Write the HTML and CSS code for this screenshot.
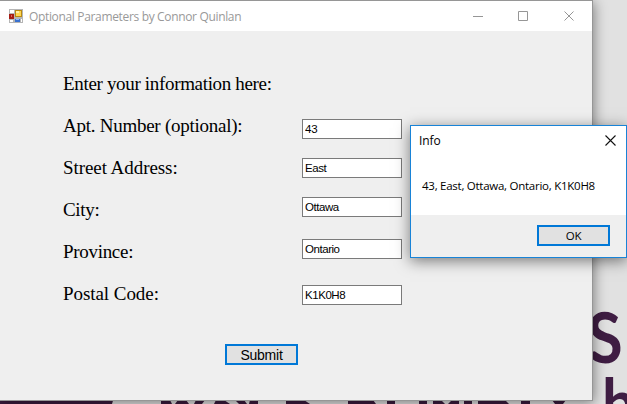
FILE: index.html
```html
<!DOCTYPE html>
<html lang="en">
<head>
<meta charset="utf-8">
<title>Optional Parameters by Connor Quinlan</title>
<link rel="stylesheet" href="styles.css">
</head>
<body>
<main class="desktop">
  <svg class="wallpaper" width="627" height="404" viewBox="0 0 627 404">
    <path class="ink" d="M0 380H119L112 404H0ZM161 400h9l2 4h-11ZM178 400h8l3 4h-14ZM196 400h9l-3 4h-8ZM216 400h8l6 4h-16ZM235 400h9l3 4h-8ZM250 400h8v4h-9ZM286 400h18l6 4h-24ZM348 400h25l3 4h-28ZM387 400h8v4h-8ZM419 400h8v4h-8ZM433 400h8l4 4h-12ZM452 400h7v4h-11ZM464 400h8v4h-8ZM478 400h27l4 4h-31ZM521 400h9v4h-9ZM552 400h14l-3 4h-8Z"/>
    <g class="lettering">
      <text transform="translate(589 363) skewX(3) scale(.9 1)" font-size="70">S</text>
      <text transform="translate(602 427) scale(.9 1)" font-size="67">h</text>
    </g>
  </svg>
  <section class="window">
    <header class="titlebar">
      <svg class="app-icon" width="14" height="14" viewBox="0 0 14 14">
        <path fill="#b5b5b5" d="M0 0h14v14H0z"/>
        <path fill="#fff" d="M1 1h4v3H1zM1 11h3v2H1zM12 10h1v3h-1z"/>
        <path fill="#a51c13" d="M0 5h5v5H0z"/><path fill="#e7685e" d="M2 6h1v2H2z"/>
        <path fill="#b98a12" d="M6 1h7v7H6z"/><path fill="#ffd650" d="M7 2h5v5H7z"/><path fill="#fff0a5" d="M7 2h3v2H7z"/>
        <path fill="#3971d0" d="M6 10h5v3H6z"/><path fill="#8db8ff" d="M7 10h3v1H7z"/>
      </svg>
      <h1 class="title">Optional Parameters by Connor Quinlan</h1>
      <svg class="controls" width="102" height="12" viewBox="0 0 102 12">
        <path d="M0 6.500h10M45.500 1.500h9v9h-9zM91.500 1.500l9 9M100.500 1.500l-9 9"/>
      </svg>
    </header>
    <form class="form">
      <p class="intro">Enter your information here:</p>
      <div class="fields">
        <div class="labels">
          <label class="wide" for="apt">Apt. Number (optional):</label>
          <label for="street">Street Address:</label>
          <label class="narrow" for="city">City:</label>
          <label class="narrow" for="province">Province:</label>
          <label for="postal">Postal Code:</label>
        </div>
        <div class="inputs">
          <input id="apt" class="apt" value="43">
          <input id="street" value="East">
          <input id="city" value="Ottawa">
          <input id="province" class="province" value="Ontario">
          <input id="postal" class="postal" value="K1K0H8">
        </div>
      </div>
      <button class="button submit" type="button">Submit</button>
    </form>
  </section>
  <section class="dialog" role="dialog">
    <header class="dialog-head">
      <h2 class="dialog-title">Info</h2>
      <svg width="11" height="11" viewBox="0 0 11 11"><path d="M.5.5l10 10M10.500.5l-10 10" fill="none" stroke="#111" stroke-width="1.100"/></svg>
    </header>
    <p class="message">43, East, Ottawa, Ontario, K1K0H8</p>
    <footer class="dialog-foot"><button class="button ok" type="button">OK</button></footer>
  </section>
</main>
</body>
</html>
```
FILE: styles.css
```css
* { box-sizing: border-box; }
body { margin: 0; }
h1, h2, p { margin: 0; font-weight: 400; }
.desktop { position: relative; width: 627px; height: 404px; overflow: hidden; background: #e1e1e1; }
.wallpaper { position: absolute; inset: 0; }
.ink { fill: #3b1b3e; }
.lettering { font-family: Lato, sans-serif; font-weight: 700; fill: #3f1d43; }
.window {
  position: absolute; left: -1px; top: 0; width: 594px; height: 401px;
  border: 1px solid #969696; background: #efefef;
  box-shadow: 1px 2px 12px rgba(0, 0, 0, .45);
}
.titlebar { display: flex; align-items: center; height: 30px; padding: 0 17px 0 9px; background: #fff; }
.title { margin-left: 6px; font: 12px "Open Sans", sans-serif; letter-spacing: -.34px; white-space: nowrap; color: #999; }
.controls { margin-left: auto; fill: none; stroke: #969696; }
.form { padding: 42px 0 0 63px; font: 19px/22px "Liberation Serif", serif; letter-spacing: -.06px; color: #000; }
.intro { height: 42px; letter-spacing: -.33px; }
.fields { display: flex; }
.labels { display: grid; grid-auto-rows: 42px; width: 239px; }
.wide { letter-spacing: -.26px; }
.narrow { letter-spacing: -.3px; }
.inputs { display: flex; flex-direction: column; gap: 19px; padding-top: 4px; }
.inputs input {
  width: 100px; height: 20px; padding: 0 2px; border: 1px solid #7a7a7a; border-radius: 0;
  background: #fff; color: #000; font: 11.5px "Liberation Sans", sans-serif; letter-spacing: -.45px;
}
.inputs .apt { letter-spacing: -.2px; }
.inputs .province { margin-top: 3px; }
.inputs .postal { margin-top: 7px; }
.button { display: block; width: 73px; height: 21px; padding: 0; border: 2px solid #0078d7; border-radius: 0; background: #e1e1e1; color: #000; }
.submit { margin: 19px 0 0 162px; padding-top: 1px; font: 14px/16px "Liberation Sans", sans-serif; letter-spacing: -.25px; }
.dialog {
  position: absolute; left: 410px; top: 125px; width: 217px; height: 133px;
  display: flex; flex-direction: column; border: 1px solid #1883d7; background: #fff;
  box-shadow: 0 3px 14px rgba(0, 0, 0, .5); font: 12px "Open Sans", sans-serif; color: #000;
}
.dialog-head { display: flex; justify-content: space-between; align-items: center; height: 29px; padding: 0 10px 0 8px; }
.dialog-title { font: inherit; letter-spacing: -.1px; }
.message { flex: 1; padding: 23px 0 0 11px; font-size: 11.5px; letter-spacing: -.26px; white-space: nowrap; }
.dialog-foot { display: flex; justify-content: flex-end; height: 42px; padding: 10px 16px 0 0; background: #efefef; }
.ok { font: 11.5px/17px "Open Sans", sans-serif; letter-spacing: -.3px; }
```
